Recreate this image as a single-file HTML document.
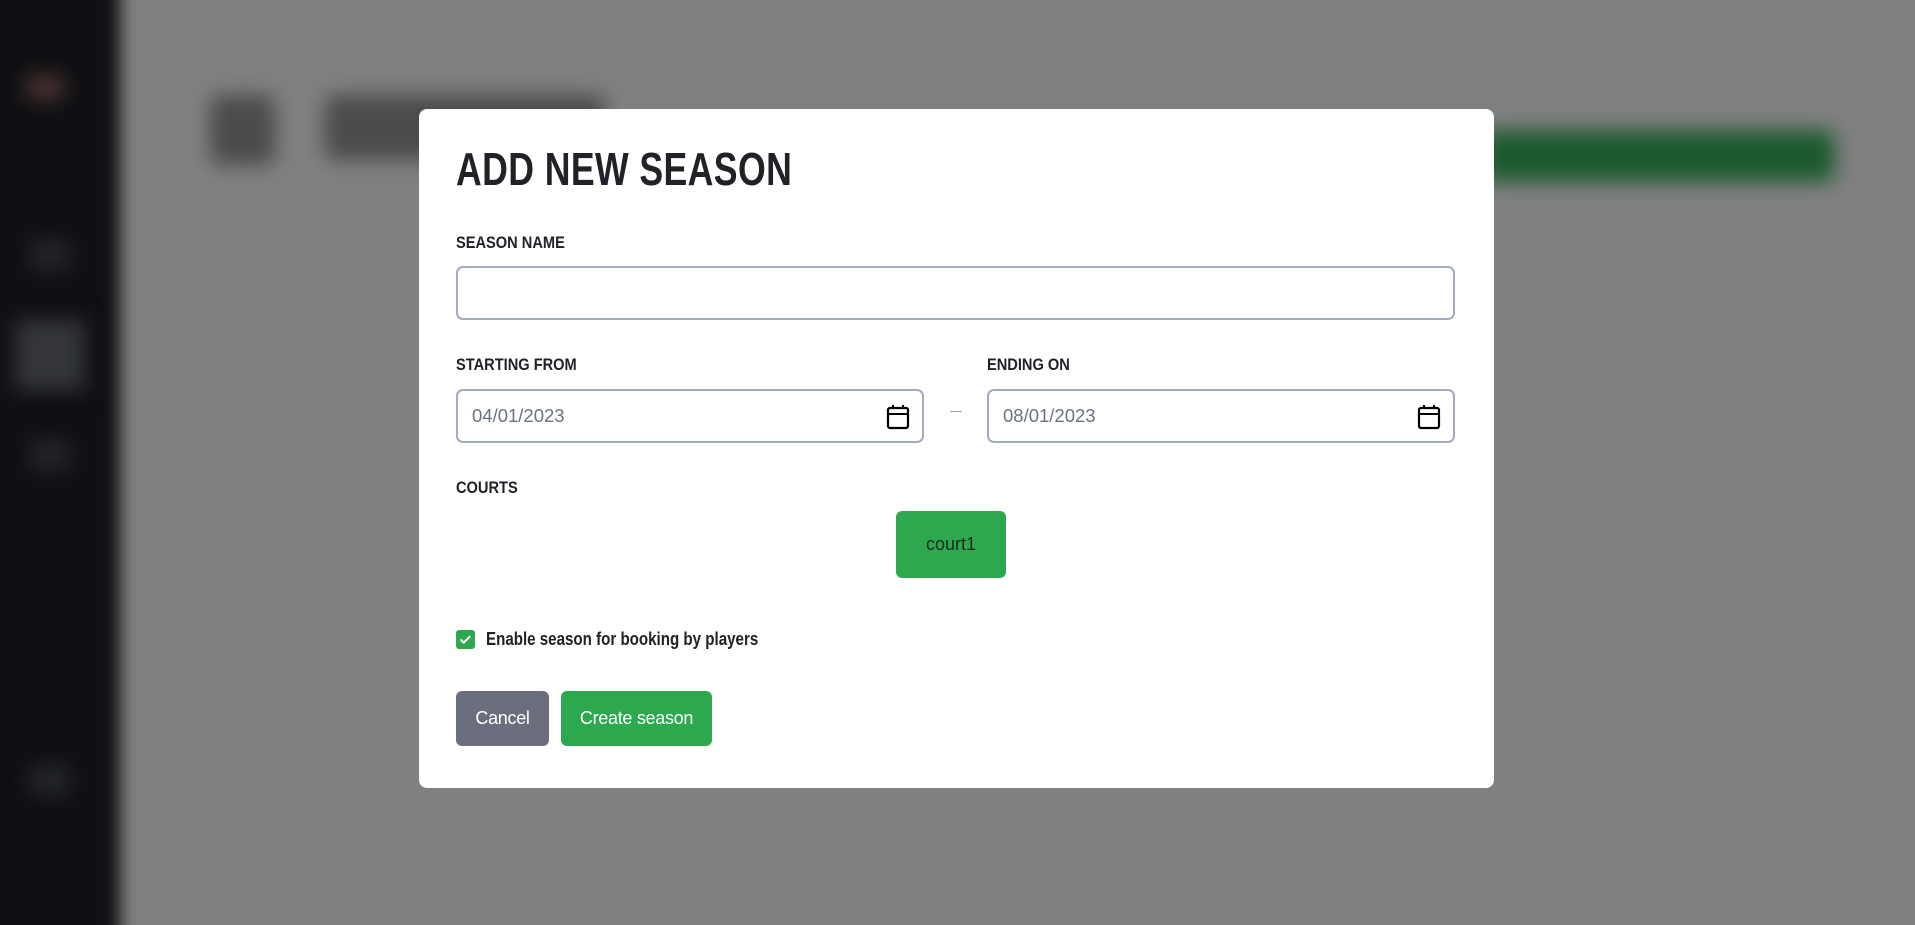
<!DOCTYPE html>
<html style="overflow:hidden;height:925px"><head><meta charset="utf-8"><style>
*{box-sizing:border-box;margin:0;padding:0}
body{width:1915px;height:925px;overflow:hidden;background:#808080;font-family:"Liberation Sans",sans-serif}
#wrap{position:relative;width:1915px;height:925px;overflow:hidden;background:#808080}
.bg{position:absolute;filter:blur(10px)}
.modal{position:absolute;left:419px;top:109px;width:1075px;height:679px;background:#fff;border-radius:8px}
.cond{font-family:"Liberation Sans Narrow","Liberation Sans",sans-serif;font-stretch:condensed}
h1{position:absolute;left:37px;top:33px;font-size:46px;font-weight:bold;color:#212227;letter-spacing:0.5px;transform:scaleX(0.775);transform-origin:left}
.lab{position:absolute;left:37px;font-size:17px;font-weight:bold;color:#212227;transform:scaleX(0.86);transform-origin:left;white-space:nowrap}
.inp{position:absolute;height:54px;border:2px solid #a3abbd;border-radius:7px}
.date{font-size:18.5px;color:#6b7280;padding-left:14px;line-height:50px}
.cal{position:absolute;right:12px;top:13px}
.btn{position:absolute;top:582px;height:55px;border-radius:6px;color:#fff;font-size:18px;line-height:55px;text-align:center;letter-spacing:-0.3px}
</style></head><body><div id="wrap">
<div class="bg" style="left:-30px;top:-30px;width:150px;height:985px;background:#0f1013;filter:blur(8px)"></div>
<div class="bg" style="left:25px;top:75px;width:40px;height:25px;background:#4a3430;border-radius:10px"></div>
<div class="bg" style="left:30px;top:240px;width:40px;height:30px;background:#24262a"></div>
<div class="bg" style="left:15px;top:320px;width:70px;height:70px;background:#34363b"></div>
<div class="bg" style="left:30px;top:440px;width:40px;height:30px;background:#24262a"></div>
<div class="bg" style="left:30px;top:765px;width:40px;height:30px;background:#24262a"></div>
<div class="bg" style="left:210px;top:95px;width:65px;height:70px;background:#4a4b4d;border-radius:10px"></div>
<div class="bg" style="left:325px;top:95px;width:280px;height:65px;background:#4a4b4d;border-radius:10px"></div>
<div class="bg" style="left:1480px;top:130px;width:355px;height:52px;background:#1c5a2e;border-radius:12px"></div>
<div class="modal">
<h1 class="cond">ADD NEW SEASON</h1>
<div class="lab cond" style="top:124px">SEASON NAME</div>
<div class="inp" style="left:37px;top:157px;width:999px"></div>
<div class="lab cond" style="top:246px">STARTING FROM</div>
<div class="inp date" style="left:37px;top:280px;width:468px">04/01/2023
<svg class="cal" width="24" height="26" viewBox="0 0 24 26"><rect x="2" y="4" width="20" height="20" rx="2" fill="none" stroke="#000" stroke-width="2.2"/><line x1="2" y1="10" x2="22" y2="10" stroke="#000" stroke-width="2"/><line x1="7" y1="1" x2="7" y2="5" stroke="#000" stroke-width="2"/><line x1="17" y1="1" x2="17" y2="5" stroke="#000" stroke-width="2"/></svg></div>
<div style="position:absolute;left:531px;top:302px;width:12px;height:1px;background:#9ca3af"></div>
<div class="lab cond" style="left:568px;top:246px">ENDING ON</div>
<div class="inp date" style="left:568px;top:280px;width:468px">08/01/2023
<svg class="cal" width="24" height="26" viewBox="0 0 24 26"><rect x="2" y="4" width="20" height="20" rx="2" fill="none" stroke="#000" stroke-width="2.2"/><line x1="2" y1="10" x2="22" y2="10" stroke="#000" stroke-width="2"/><line x1="7" y1="1" x2="7" y2="5" stroke="#000" stroke-width="2"/><line x1="17" y1="1" x2="17" y2="5" stroke="#000" stroke-width="2"/></svg></div>
<div class="lab cond" style="top:369px">COURTS</div>
<div style="position:absolute;left:477px;top:402px;width:110px;height:67px;background:#2ea84f;border-radius:6px;color:#1a2a1f;font-size:18px;line-height:67px;text-align:center">court1</div>
<div style="position:absolute;left:37px;top:521px;width:19px;height:19px;background:#2ea84f;border-radius:3px"><svg width="19" height="19" viewBox="0 0 19 19"><path d="M4.5 9.5l3.2 3.2 6.5-6.5" fill="none" stroke="#fff" stroke-width="2"/></svg></div>
<div class="lab cond" style="left:67px;top:520px;font-size:18px;transform:scaleX(0.84)">Enable season for booking by players</div>
<div class="btn" style="left:37px;width:93px;background:#6b6f7d">Cancel</div>
<div class="btn" style="left:142px;width:151px;background:#2ea84f">Create season</div>
</div>
</div></body></html>
